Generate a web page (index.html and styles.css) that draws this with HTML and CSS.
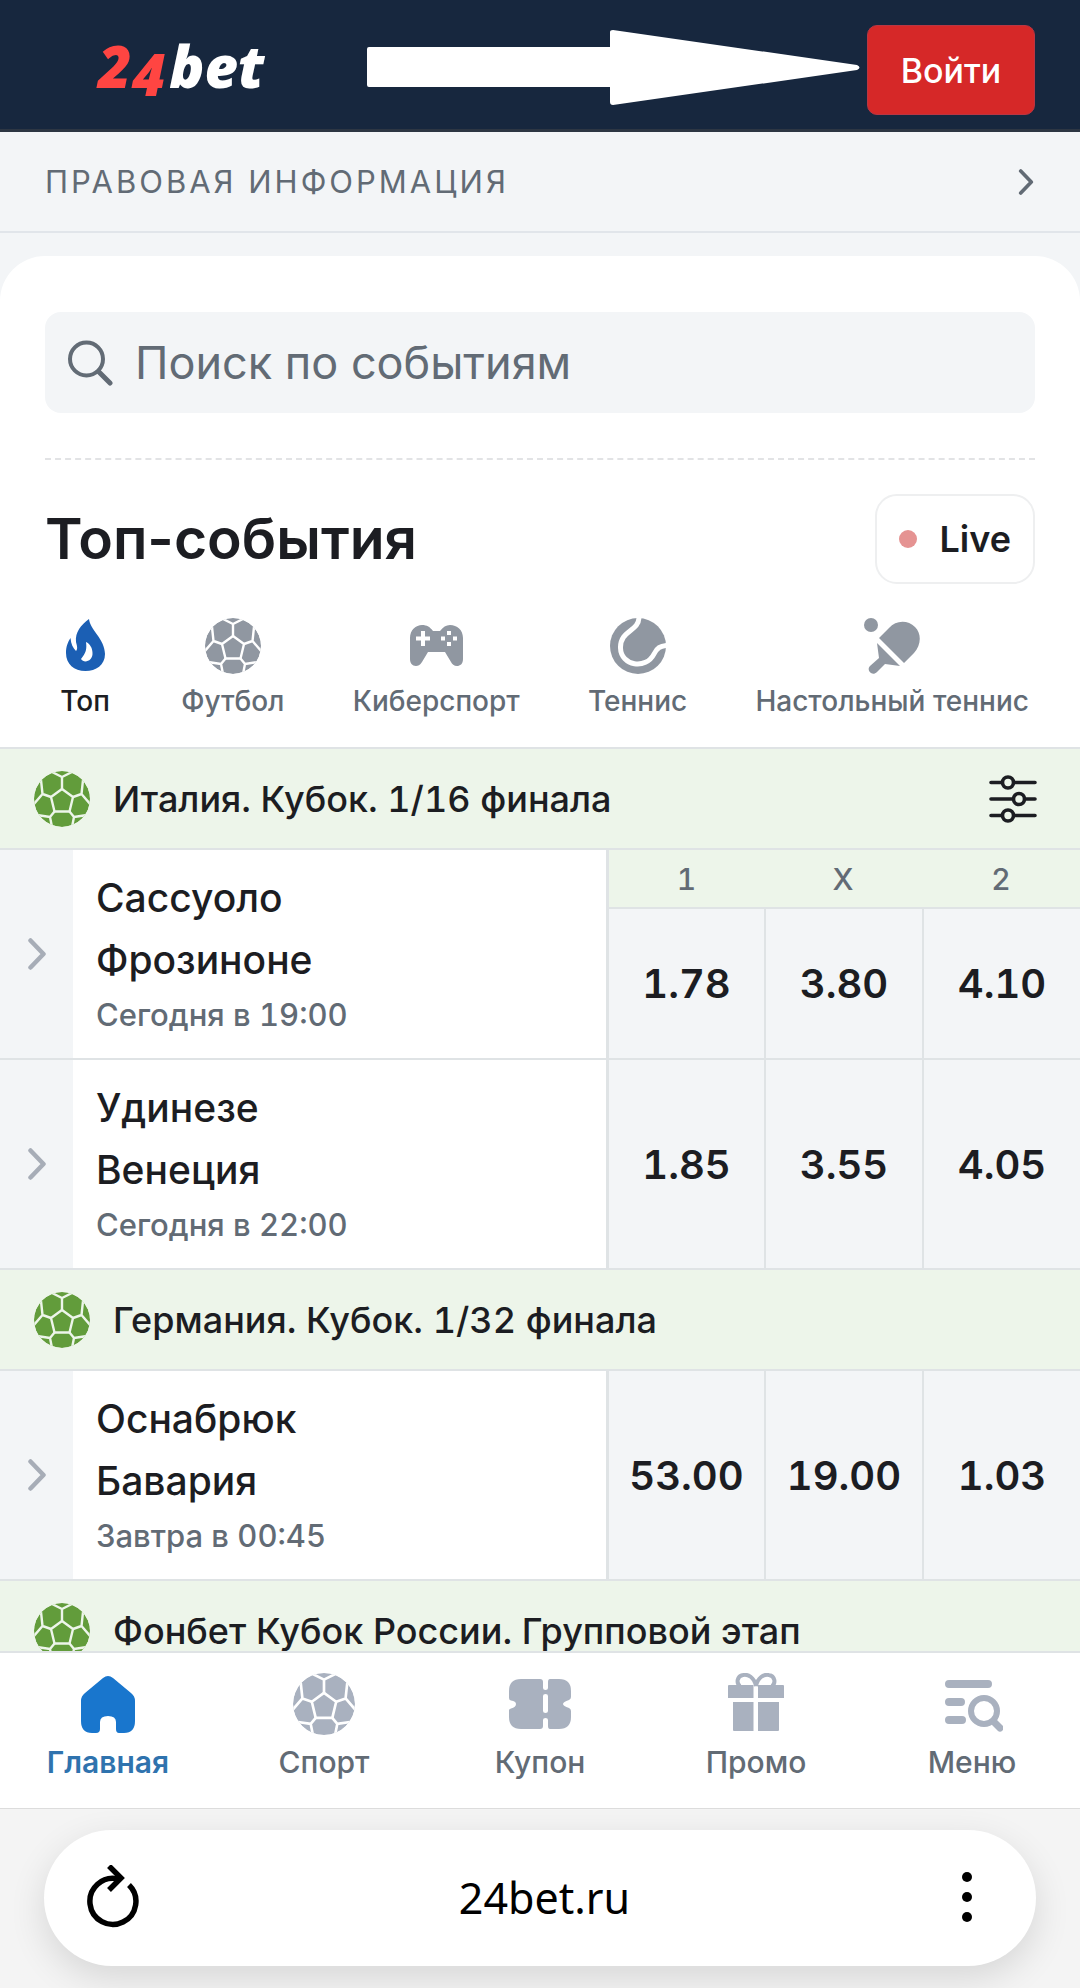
FILE: index.html
```html
<!DOCTYPE html>
<html lang="ru">
<head>
<meta charset="utf-8">
<meta name="viewport" content="width=device-width, initial-scale=1">
<title>24bet</title>
<link rel="stylesheet" href="styles.css">
</head>
<body>
<svg class="defs" aria-hidden="true">
  <symbol id="ball" viewBox="0 0 56 56">
    <clipPath id="ball-clip"><circle cx="28" cy="28" r="28"/></clipPath>
    <g clip-path="url(#ball-clip)">
      <circle cx="28" cy="28" r="28" fill="currentColor"/>
      <g fill="none" stroke="var(--seam)" stroke-width="2.400" stroke-linejoin="round">
        <path d="M28 18L39 26L35.500 40.500H20.500L17 26Z"/>
        <path d="M28 18V6L16 0M28 6L40 0"/>
        <path d="M17 26L8.500 23L7 9M8.500 23L-1 34"/>
        <path d="M39 26L47.500 23L49 9M47.500 23L57 34"/>
        <path d="M20.500 40.500L16 46L3 44M16 46L18 56"/>
        <path d="M35.500 40.500L40 46L53 44M40 46L38 56"/>
      </g>
    </g>
  </symbol>
  <symbol id="chevron" viewBox="0 0 18 32">
    <path d="M2.500 2.500L15.500 16L2.500 29.500" fill="none" stroke="currentColor" stroke-width="4.500" stroke-linecap="round" stroke-linejoin="round"/>
  </symbol>
</svg>

<div class="app">
  <header class="header">
    <a class="logo" href="#" aria-label="24bet"><span class="logo-num">2<span class="logo-four">4</span></span><span class="logo-word">bet</span></a>
    <svg class="arrow" viewBox="0 0 496 84" aria-hidden="true"><path d="M3 19H244V4Q244 2 247 2L491 37Q496 39.500 491 42L247 77Q244 77 244 74V59H3Q1 59 1 57V21Q1 19 3 19Z" fill="#fff"/></svg>
    <button class="login" type="button">Войти</button>
  </header>

  <a class="legal" href="#">
    <span>ПРАВОВАЯ ИНФОРМАЦИЯ</span>
    <svg class="legal-chevron"><use href="#chevron"/></svg>
  </a>

  <main class="sheet">
    <div class="search-area">
      <label class="search">
        <svg class="search-icon" viewBox="0 0 46 46" aria-hidden="true"><circle cx="19.500" cy="19" r="16.500" fill="none" stroke="currentColor" stroke-width="4"/><path d="M32 32L43 43" stroke="currentColor" stroke-width="5" stroke-linecap="round"/></svg>
        <input type="search" placeholder="Поиск по событиям" aria-label="Поиск по событиям">
      </label>
    </div>

    <div class="title-row">
      <h1>Топ-события</h1>
      <button class="live" type="button"><span class="dot"></span>Live</button>
    </div>

    <nav class="sports" aria-label="Виды спорта">
      <a class="sport active" href="#">
        <svg viewBox="0 0 56 56"><path d="M32 1C33 12 48 21 48 36C48 47 39 53 28.500 53C17 53 9 46 9 35C9 28 11 24 13.500 20C14 26 16 30 19 33C21 31 20 28 19 24C18 14 24 7 32 1ZM29 24C30 31 29 35 24 41C27 46 36 43 35.500 35C35.500 30 33 26 29 24Z" fill="currentColor" fill-rule="evenodd"/></svg>
        Топ
      </a>
      <a class="sport" href="#"><svg><use href="#ball"/></svg>Футбол</a>
      <a class="sport" href="#">
        <svg viewBox="0 0 56 56"><path d="M2 20C2 12 8 7 14 7C19 7 22 9 25 13H32C35 9 38 7 42 7C49 7 55 12 55 20V41C55 46 52 48 49 48C46 48 44 46 43 44L37 34H20L14 44C12 47 10 48 8 48C4 48 2 45 2 41Z" fill="currentColor"/><path d="M15 13V28M8 20.500H22" stroke="#fff" stroke-width="4"/><path d="M39 13h4v4h-4zM39 24h4v4h-4zM33 18.500h4v4h-4zM45 18.500h4v4h-4z" fill="#fff"/></svg>
        Киберспорт
      </a>
      <a class="sport" href="#">
        <svg viewBox="0 0 56 56"><circle cx="28" cy="28" r="28" fill="currentColor"/><path d="M29 -1C29 14 10 12 10.500 30C11 48 36 52 44 36C47 30 50 28 57 27.500" fill="none" stroke="#fff" stroke-width="5"/></svg>
        Теннис
      </a>
      <a class="sport" href="#">
        <svg viewBox="0 0 56 56"><g fill="currentColor"><circle cx="7" cy="7" r="7"/><path d="M15 20L25 10C32 2 44 2 51 9C58 16 57 27 50 35L40 45Z"/><path d="M13 25L36 48L21 46L13 54C8 59 2 52 6 48L15 40Z"/></g></svg>
        Настольный теннис
      </a>
    </nav>

    <section>
      <h2 class="league"><svg class="league-ball"><use href="#ball"/></svg><span>Италия. Кубок. 1/16 финала</span>
        <button class="filter" type="button" aria-label="Фильтр"><svg viewBox="0 0 48 48"><g fill="none" stroke="currentColor" stroke-width="3.600" stroke-linecap="round"><path d="M2 7.500H13M25 7.500H46M2 24H24M36 24H46M2 40.500H13M25 40.500H46"/><circle cx="19" cy="7.500" r="5.500"/><circle cx="30" cy="24" r="5.500"/><circle cx="19" cy="40.500" r="5.500"/></g></svg></button>
      </h2>
      <table class="events">
        <colgroup><col class="c-open"><col><col class="c-odd"><col class="c-odd"><col class="c-odd"></colgroup>
        <tbody>
          <tr class="head">
            <td class="open" rowspan="2"><button type="button" aria-label="Подробнее"><svg><use href="#chevron"/></svg></button></td>
            <td class="match" rowspan="2"><div class="team">Сассуоло</div><div class="team">Фрозиноне</div><div class="time">Сегодня в 19:00</div></td>
            <th>1</th><th>X</th><th>2</th>
          </tr>
          <tr class="rest"><td class="odd"><button type="button">1.78</button></td><td class="odd"><button type="button">3.80</button></td><td class="odd"><button type="button">4.10</button></td></tr>
          <tr class="row">
            <td class="open"><button type="button" aria-label="Подробнее"><svg><use href="#chevron"/></svg></button></td>
            <td class="match"><div class="team">Удинезе</div><div class="team">Венеция</div><div class="time">Сегодня в 22:00</div></td>
            <td class="odd"><button type="button">1.85</button></td><td class="odd"><button type="button">3.55</button></td><td class="odd"><button type="button">4.05</button></td>
          </tr>
        </tbody>
      </table>
    </section>

    <section>
      <h2 class="league"><svg class="league-ball"><use href="#ball"/></svg><span>Германия. Кубок. 1/32 финала</span></h2>
      <table class="events">
        <colgroup><col class="c-open"><col><col class="c-odd"><col class="c-odd"><col class="c-odd"></colgroup>
        <tbody>
          <tr class="row">
            <td class="open"><button type="button" aria-label="Подробнее"><svg><use href="#chevron"/></svg></button></td>
            <td class="match"><div class="team">Оснабрюк</div><div class="team">Бавария</div><div class="time">Завтра в 00:45</div></td>
            <td class="odd"><button type="button">53.00</button></td><td class="odd"><button type="button">19.00</button></td><td class="odd"><button type="button">1.03</button></td>
          </tr>
        </tbody>
      </table>
    </section>

    <section>
      <h2 class="league"><svg class="league-ball"><use href="#ball"/></svg><span>Фонбет Кубок России. Групповой этап</span></h2>
    </section>
  </main>

  <footer class="bottom">
    <nav class="tabs" aria-label="Основная навигация">
      <a class="tab active" href="#"><svg viewBox="0 0 62 62"><path d="M26 5Q31 1 36 5L54 20Q58 23 58 28V48Q58 60 47 60H42Q39 60 39 56V49Q39 43 31 43Q23 43 23 49V56Q23 60 19 60H15Q4 60 4 48V28Q4 23 8 20Z" fill="currentColor"/></svg>Главная</a>
      <a class="tab" href="#"><svg><use href="#ball"/></svg>Спорт</a>
      <a class="tab" href="#"><svg viewBox="0 0 62 62"><path d="M12 6H31Q34 6 34 9V15Q34 17 36.500 17Q39 17 39 15V9Q39 6 41 6H50Q62 6 62 18V24Q62 26 60 27Q54 29 54 31Q54 33 60 35Q62 36 62 38V44Q62 56 50 56H41Q39 56 39 53V47Q39 45 36.500 45Q34 45 34 47V53Q34 56 31 56H12Q0 56 0 44V37Q0 36 2 35.500Q7 34 7 31Q7 28 2 27.500Q0 27 0 25V18Q0 6 12 6ZM36.500 21Q34 21 34 23V38Q34 40 36.500 40Q39 40 39 38V23Q39 21 36.500 21Z" fill="currentColor" fill-rule="evenodd"/></svg>Купон</a>
      <a class="tab" href="#"><svg viewBox="0 0 62 62"><path d="M31 13C29 4 23 1 18 2C12 3 11 10 15 13M31 13C33 4 39 1 44 2C50 3 51 10 47 13" fill="none" stroke="currentColor" stroke-width="4"/><path d="M4 12H28.500V25H3V13Q3 12 4 12ZM33 12H58Q59 12 59 13V25H33ZM8 29H28.500V58H9Q8 58 8 57ZM33 29H54V57Q54 58 53 58H33Z" fill="currentColor"/></svg>Промо</a>
      <a class="tab" href="#"><svg viewBox="0 0 62 62"><g fill="none" stroke="currentColor" stroke-linecap="round"><path d="M8 11H47M8 29H20M8 47H21" stroke-width="8"/><circle cx="43" cy="38" r="13" stroke-width="6"/><path d="M54 50L59 55" stroke-width="7"/></g></svg>Меню</a>
    </nav>
    <div class="browser">
      <div class="address">
        <button type="button" aria-label="Обновить"><svg viewBox="0 0 54 64"><path d="M44 20A23 23 0 1 1 33 14" fill="none" stroke="currentColor" stroke-width="5.500"/><path d="M24 1L36 13L24 25" fill="none" stroke="currentColor" stroke-width="5.500"/></svg></button>
        <span class="url">24bet.ru</span>
        <button type="button" aria-label="Ещё"><svg viewBox="0 0 54 64"><g fill="currentColor"><circle cx="27" cy="12" r="5"/><circle cx="27" cy="32" r="5"/><circle cx="27" cy="52" r="5"/></g></svg></button>
      </div>
    </div>
  </footer>
</div>
</body>
</html>
```

FILE: styles.css
```css
:root {
  --navy: #17273e;
  --ink: #1c1d22;
  --muted: #626b75;
  --icon: #9097a1;
  --tab-icon: #a9b1bf;
  --pale: #f3f5f7;
  --green: #edf5ea;
  --line: #dfe3e5;
  --gutter: 45px;
  --seam: #fff;
}

* { box-sizing: border-box; }

body {
  margin: 0;
  font-family: Inter, "Liberation Sans", sans-serif;
  color: var(--ink);
  background: var(--pale);
}

a { color: inherit; text-decoration: none; }

button {
  padding: 0;
  border: 0;
  background: none;
  color: inherit;
  font: inherit;
}

svg { display: block; flex: none; }

.defs { position: absolute; width: 0; height: 0; }

.app {
  display: flex;
  flex-direction: column;
  height: 100vh;
}

.header {
  display: flex;
  align-items: center;
  flex: none;
  height: 132px;
  padding: 11px var(--gutter) 0 98px;
  border-bottom: 3px solid #2d3643;
  background: var(--navy);
}

.logo {
  display: flex;
  align-items: baseline;
  gap: 4px;
  font-family: "Open Sans", sans-serif;
  font-size: 58px;
  font-style: italic;
  font-weight: 800;
  line-height: 64px;
  color: #fff;
}

.logo-num { display: flex; color: #ff4542; }
.logo-four { padding-top: 8px; }

.arrow { width: 496px; height: 84px; margin-left: auto; }

.login {
  width: 168px;
  height: 90px;
  margin-left: 5px;
  border: 1px solid #b93643;
  border-radius: 10px;
  background: #d62828;
  color: #fff;
  font-size: 34px;
  font-weight: 500;
}

.legal {
  display: flex;
  align-items: center;
  justify-content: space-between;
  flex: none;
  height: 101px;
  padding: 0 var(--gutter);
  border-bottom: 2px solid #e1e5ea;
  color: var(--muted);
  font-size: 31px;
  letter-spacing: 3px;
}

.legal-chevron { width: 18px; height: 26px; }

.sheet {
  flex: 1;
  min-height: 0;
  margin-top: 23px;
  overflow: hidden;
  border-radius: 45px 45px 0 0;
  background: #fff;
}

.search-area {
  margin: 56px var(--gutter) 0;
  padding-bottom: 45px;
  border-bottom: 2px dashed #e2e3e5;
}

.search {
  display: flex;
  align-items: center;
  gap: 22px;
  height: 101px;
  padding: 0 22px;
  border-radius: 16px;
  background: var(--pale);
  color: var(--muted);
}

.search-icon { width: 46px; height: 46px; }

.search input {
  flex: 1;
  min-width: 0;
  padding: 0;
  border: 0;
  outline: 0;
  background: none;
  color: inherit;
  font: inherit;
  font-size: 45px;
}

.search input::placeholder { color: inherit; opacity: 1; }

.title-row {
  display: flex;
  align-items: center;
  justify-content: space-between;
  margin: 34px var(--gutter) 0;
}

h1 { margin: 0; font-size: 57px; font-weight: 600; line-height: 90px; }

.live {
  display: flex;
  align-items: center;
  gap: 22px;
  height: 90px;
  padding: 0 22px;
  border: 2px solid #eeeff0;
  border-radius: 22px;
  font-size: 36px;
  font-weight: 600;
}

.dot { width: 18px; height: 18px; border-radius: 50%; background: #e59392; }

.sports {
  display: flex;
  justify-content: space-between;
  padding: 34px 51px 28px 57px;
}

.sport {
  display: flex;
  flex-direction: column;
  align-items: center;
  gap: 9px;
  color: var(--muted);
  font-size: 28px;
  font-weight: 500;
  line-height: 36px;
}

.sport svg { width: 56px; height: 56px; color: var(--icon); }
.sport.active { color: var(--ink); }
.sport.active svg { color: #1b5fb4; }

.league {
  --seam: var(--green);
  display: flex;
  align-items: center;
  gap: 23px;
  height: 101px;
  margin: 0;
  padding: 0 43px 0 34px;
  border-top: 2px solid var(--line);
  background: var(--green);
  font-size: 36px;
  font-weight: 500;
  font-variant-numeric: tabular-nums;
}

.league-ball { width: 56px; height: 56px; color: #629c3b; }
.filter { margin-left: auto; }
.filter svg { width: 48px; height: 48px; }

.events {
  width: 100%;
  border-spacing: 0;
  border-collapse: separate;
  table-layout: fixed;
  font-variant-numeric: tabular-nums;
}

.c-open { width: 73px; }
.c-odd { width: 158px; }

.events td, .events th { padding: 0; border-top: 2px solid var(--line); }
.head { height: 59px; }
.rest { height: 151px; }
.row { height: 210px; }

.events .open, .events .odd { background: var(--pale); }
.open button { display: flex; align-items: center; justify-content: center; width: 100%; height: 100%; }
.open svg { width: 18px; height: 32px; color: #a7adb7; }

.events .match { padding: 0 23px 2px; }
.team { font-size: 39px; font-weight: 500; line-height: 62px; }
.time { color: var(--muted); font-size: 31px; font-weight: 500; line-height: 48px; }

.events th {
  background: var(--green);
  color: var(--muted);
  font-size: 30px;
  font-weight: 500;
}

.events .odd { border-left: 2px solid var(--line); text-align: center; }
.events .match + .odd,
.events .match + th,
.events .rest .odd:first-child { border-left: 3px solid var(--line); }
.odd button { width: 100%; height: 100%; font-size: 40px; font-weight: 600; }

.bottom { flex: none; }

.tabs {
  display: grid;
  grid-template-columns: repeat(5, 1fr);
  height: 158px;
  padding-top: 20px;
  border-top: 2px solid var(--line);
  border-bottom: 1px solid #dcdcdc;
  background: #fff;
}

.tab {
  display: flex;
  flex-direction: column;
  align-items: center;
  gap: 7px;
  color: var(--muted);
  font-size: 30px;
  font-weight: 500;
  line-height: 40px;
}

.tab svg { width: 62px; height: 62px; color: var(--tab-icon); }
.tab.active { color: #2f73ae; font-weight: 600; }
.tab.active svg { color: #1976cd; }

.browser { padding: 21px 44px 22px; overflow: hidden; background: #f4f4f4; }

.address {
  display: flex;
  align-items: center;
  justify-content: space-between;
  height: 136px;
  padding: 0 42px 2px 41px;
  border-radius: 68px;
  background: #fff;
  box-shadow: 0 12px 36px rgba(0, 0, 0, 0.12);
  color: #000;
}

.address svg { width: 54px; height: 64px; }
.url { padding-left: 10px; font-family: "Noto Sans", sans-serif; font-size: 43px; }
```
